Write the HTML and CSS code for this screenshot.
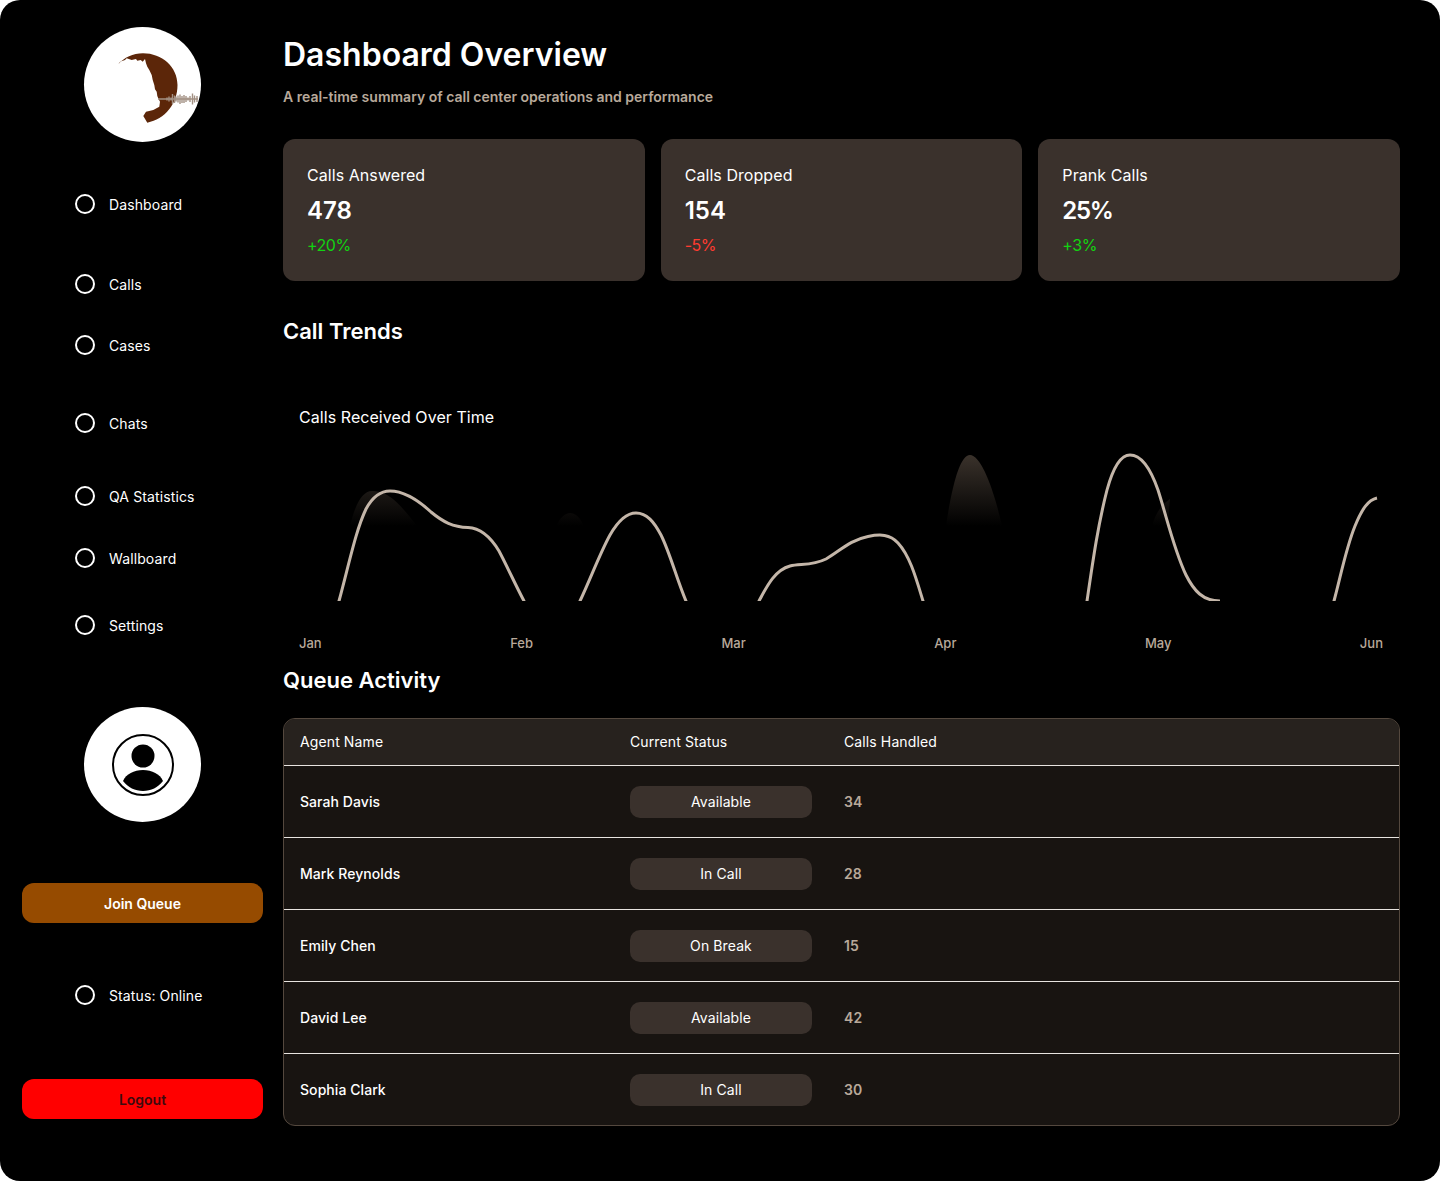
FILE: index.html
```html
<!DOCTYPE html>
<html>
    <head>
        <meta charset="utf-8">
        <title>Dashboard Overview</title>
        <link rel="stylesheet" href="styles.css">
    </head>
    <body>
        <div class="app">
            <aside class="sidebar">
                <div class="round-badge logo">
                    <svg viewBox="84 27 117 115" width="117" height="115">
                        <path class="logo-moon" d="M118.300 64.300 L120 61.700 L125 60 L126.700 58.300 L131.700 60 L136 59 L137.300 60.700 L140.700 60 L142.700 61.700 L145 59 L146 63.300 L147.300 66.700 L149.300 70 L151.700 75 L152.700 80 L154.300 85 L155 89.300 L156.700 91.700 L157.300 96 L158.700 99.300 L160 101.700 L159.300 106.700 L153.300 110 L146 111.700 L143.300 116 L147.300 122.700 C165 119 177.500 104 177.500 85 C177.500 67 162 53.300 143 53.300 C133 53.300 124 57.500 118.300 64.300 Z"/>
                        <path class="logo-wave" d="M158 99 H198 M167 97.500 V100.500 M169 96.500 V101.500 M171 97.500 V100.500 M172.500 94 V104 M174.500 95.500 V103 M176 96.500 V101.500 M178 95.500 V102.500 M180 94.500 V104 M182 96 V103 M184 95 V103 M186 96 V102 M188 97.500 V100.500 M190 96 V102 M192.500 93.500 V104.500 M194.500 95.500 V102.500 M197 96 V102"/>
                    </svg>
                </div>

                <nav class="nav">
                    <a class="nav-item nav-dashboard"><span class="ring"></span>Dashboard</a>
                    <a class="nav-item nav-calls"><span class="ring"></span>Calls</a>
                    <a class="nav-item nav-cases"><span class="ring"></span>Cases</a>
                    <a class="nav-item nav-chats"><span class="ring"></span>Chats</a>
                    <a class="nav-item nav-qa"><span class="ring"></span>QA Statistics</a>
                    <a class="nav-item nav-wallboard"><span class="ring"></span>Wallboard</a>
                    <a class="nav-item nav-settings"><span class="ring"></span>Settings</a>
                </nav>

                <div class="round-badge avatar">
                    <svg viewBox="0 0 64 64" width="64" height="64">
                        <circle class="avatar-ring" cx="32" cy="32" r="30"/>
                        <circle cx="32" cy="23" r="11.500"/>
                        <path d="M12 48 C15 41 23 37 32 37 C41 37 49 41 52 48 C47 54.500 40 58 32 58 C24 58 17 54.500 12 48 Z"/>
                    </svg>
                </div>

                <button class="btn btn-join">Join Queue</button>
                <a class="nav-item nav-status"><span class="ring"></span>Status: Online</a>
                <button class="btn btn-logout">Logout</button>
            </aside>

            <main class="main">
                <h1 class="page-title">Dashboard Overview</h1>
                <p class="page-sub">A real-time summary of call center operations and performance</p>

                <div class="cards">
                    <div class="card">
                        <div class="card-label">Calls Answered</div>
                        <div class="card-value">478</div>
                        <div class="card-delta up">+20%</div>
                    </div>
                    <div class="card">
                        <div class="card-label">Calls Dropped</div>
                        <div class="card-value">154</div>
                        <div class="card-delta down">-5%</div>
                    </div>
                    <div class="card">
                        <div class="card-label">Prank Calls</div>
                        <div class="card-value pct">25%</div>
                        <div class="card-delta up">+3%</div>
                    </div>
                </div>

                <h2 class="section-title">Call Trends</h2>

                <div class="chart">
                    <div class="chart-title">Calls Received Over Time</div>
                    <svg class="chart-plot" viewBox="283 440 1117 161" width="1117" height="161">
                        <defs>
                            <linearGradient id="fade" gradientUnits="userSpaceOnUse" x1="0" y1="455" x2="0" y2="526">
                                <stop offset="0" stop-color="#3a322b"/>
                                <stop offset="1" stop-color="#000"/>
                            </linearGradient>
                        </defs>
                        <!-- faded area bits -->
                        <path class="area" d="M350 526 C355 505 362 491 372 491 C385 491 395 497 417 526 Z"/>
                        <path class="area" d="M556 526 C560 518 565 513 570 513 C576 513 580 518 584 526 Z"/>
                        <path class="area" d="M946 526 C952 485 960 455 970 455 C981 455 994 490 1002 526 Z"/>
                        <path class="area" d="M1152 526 C1156 512 1162 504 1170 499 L1168 526 Z"/>
                        <!-- line, cut in five by the bottom of the plot -->
                        <path class="line" d="M337 608 L339 601 C350 560 356 530 366 509 C373 496 381 491 390 491 C405 491 418 500 431 512 C443 522 453 527 468 527.500 C480 528 490 536 499 551 C507 566 515 584 524 601 L528 608"/>
                        <path class="line" d="M577 608 L580 601 C590 580 600 553 610 535 C618 521 626 513 636 513 C647 513 654 522 661 535 C670 553 677 580 686 601 L689 608"/>
                        <path class="line" d="M755 608 L759 601 C767 586 775 570 790 566 C800 563.500 812 566 826 559 C840 551 850 540 868 536.500 C880 534 890 534 898 543 C910 556 916 578 923 601 L925 608"/>
                        <path class="line" d="M1086 608 L1087 601 C1093 560 1098 525 1107 490 C1113 468 1120 455 1130 455 C1142 455 1151 470 1158 490 C1167 518 1174 550 1186 575 C1194 591 1203 601 1220 601"/>
                        <path class="line" d="M1332 608 L1334 601 C1341 575 1346 548 1355 526 C1362 509 1368 500 1377 498"/>
                    </svg>
                    <div class="chart-axis">
                        <span>Jan</span><span>Feb</span><span>Mar</span><span>Apr</span><span>May</span><span>Jun</span>
                    </div>
                </div>

                <h2 class="section-title queue-title">Queue Activity</h2>

                <div class="table-wrap">
                    <table class="queue">
                        <thead>
                            <tr><th>Agent Name</th><th>Current Status</th><th>Calls Handled</th></tr>
                        </thead>
                        <tbody>
                            <tr><td class="agent">Sarah Davis</td><td><span class="pill">Available</span></td><td class="count">34</td></tr>
                            <tr><td class="agent">Mark Reynolds</td><td><span class="pill">In Call</span></td><td class="count">28</td></tr>
                            <tr><td class="agent">Emily Chen</td><td><span class="pill">On Break</span></td><td class="count">15</td></tr>
                            <tr><td class="agent">David Lee</td><td><span class="pill">Available</span></td><td class="count">42</td></tr>
                            <tr><td class="agent">Sophia Clark</td><td><span class="pill">In Call</span></td><td class="count">30</td></tr>
                        </tbody>
                    </table>
                </div>
            </main>
        </div>
    </body>
</html>
```

FILE: styles.css
```css
* {
    box-sizing: border-box;
}

body {
    margin: 0;
    background-color: #ffffff;
    font-family: Inter, "Liberation Sans", sans-serif;
    letter-spacing: 0.004em;
    color: #ffffff;
}

.app {
    display: flex;
    width: 1440px;
    height: 1181px;
    background-color: #000000;
    border-radius: 20px;
    overflow: hidden;
}

/* sidebar */
.sidebar {
    flex: none;
    width: 283px;
    padding: 27px 20px 0 22px;
    display: flex;
    flex-direction: column;
}

.round-badge {
    width: 117px;
    height: 115px;
    margin-left: 62px;
    border-radius: 50%;
    background-color: #ffffff;
    display: flex;
    align-items: center;
    justify-content: center;
    flex: none;
}

.logo svg {
    display: block;
}

.logo-moon {
    fill: #5c2609;
}

.logo-wave {
    fill: none;
    stroke: #a39184;
    stroke-width: 1.4;
}

.avatar {
    margin-top: 70px;
}

.avatar-ring {
    fill: none;
    stroke: #000000;
    stroke-width: 2;
}

.nav {
    display: flex;
    flex-direction: column;
    margin-top: 50px;
}

.nav-item {
    display: flex;
    align-items: center;
    gap: 14px;
    height: 24px;
    padding-left: 53px;
    font-size: 14px;
    font-weight: 400;
    letter-spacing: 0.008em;
}

.ring {
    width: 20px;
    height: 20px;
    border: 2px solid #ffffff;
    border-radius: 50%;
    flex: none;
}

.nav-calls { margin-top: 56px; }
.nav-cases { margin-top: 37px; }
.nav-chats { margin-top: 54px; }
.nav-qa { margin-top: 49px; }
.nav-wallboard { margin-top: 38px; }
.nav-settings { margin-top: 43px; }
.nav-status { margin-top: 60px; }

.btn {
    display: block;
    width: 241px;
    height: 40px;
    border: 0;
    border-radius: 12px;
    font-family: inherit;
    font-size: 14px;
    font-weight: 600;
    flex: none;
}

.btn-join {
    margin-top: 61px;
    background-color: #964b00;
    color: #ffffff;
}

.btn-logout {
    margin-top: 72px;
    background-color: #ff0000;
    color: #3d0a0e;
}

/* main column */
.main {
    flex: none;
    width: 1117px;
    padding-top: 35px;
}

.page-title {
    margin: 0;
    font-size: 32px;
    line-height: 40px;
    font-weight: 600;
    letter-spacing: 0;
}

.page-sub {
    margin: 12px 0 0;
    font-size: 14px;
    line-height: 20px;
    font-weight: 600;
    letter-spacing: 0;
    color: #b8a99a;
}

.cards {
    display: flex;
    gap: 16px;
    margin-top: 32px;
}

.card {
    flex: 1;
    height: 142px;
    padding: 24px;
    background-color: #3a312c;
    border-radius: 12px;
}

.card-label {
    font-size: 16px;
    line-height: 24px;
    font-weight: 400;
}

.card-value {
    margin-top: 9px;
    font-size: 24px;
    line-height: 30px;
    font-weight: 600;
    letter-spacing: 0;
}

.pct {
    letter-spacing: -1.3px;
}

.card-delta {
    margin-top: 7px;
    font-size: 16px;
    line-height: 24px;
    letter-spacing: -0.5px;
}

.up { color: #12d312; }
.down { color: #ff3b30; }

.section-title {
    margin: 36px 0 0;
    font-size: 22px;
    line-height: 28px;
    font-weight: 600;
    letter-spacing: 0;
}

.chart {
    margin-top: 60px;
}

.chart-title {
    padding-left: 16px;
    font-size: 16px;
    line-height: 24px;
}

.chart-plot {
    display: block;
    margin-top: 11px;
}

.area {
    fill: url(#fade);
}

.line {
    fill: none;
    stroke: #c4b6a9;
    stroke-width: 3;
}

.chart-axis {
    display: flex;
    justify-content: space-between;
    margin-top: 32px;
    padding: 0 17px 0 16px;
    font-size: 13px;
    line-height: 20px;
    font-weight: 500;
    letter-spacing: 0;
    color: #b8a99a;
}

.queue-title {
    margin-top: 13px;
}

.table-wrap {
    margin-top: 24px;
    height: 408px;
    border: 1px solid #54483e;
    border-radius: 12px;
    background-color: #181411;
    overflow: hidden;
}

.queue {
    width: 100%;
    border-collapse: collapse;
    table-layout: fixed;
    font-size: 14px;
}

.queue th:nth-child(1) { width: 330px; }
.queue th:nth-child(2) { width: 214px; }

.queue th {
    height: 46px;
    padding: 0 16px;
    background-color: #27221e;
    text-align: left;
    font-weight: 400;
    letter-spacing: 0.008em;
}

.queue td {
    height: 72px;
    padding: 0 16px;
    border-top: 1px solid #e8e4e0;
}

.agent {
    font-weight: 500;
}

.count {
    font-weight: 600;
    color: #b8a99a;
}

.pill {
    display: block;
    width: 182px;
    height: 32px;
    margin-top: 1px;
    line-height: 32px;
    text-align: center;
    background-color: #3a312c;
    border-radius: 10px;
    font-weight: 400;
    letter-spacing: 0.008em;
}
```
